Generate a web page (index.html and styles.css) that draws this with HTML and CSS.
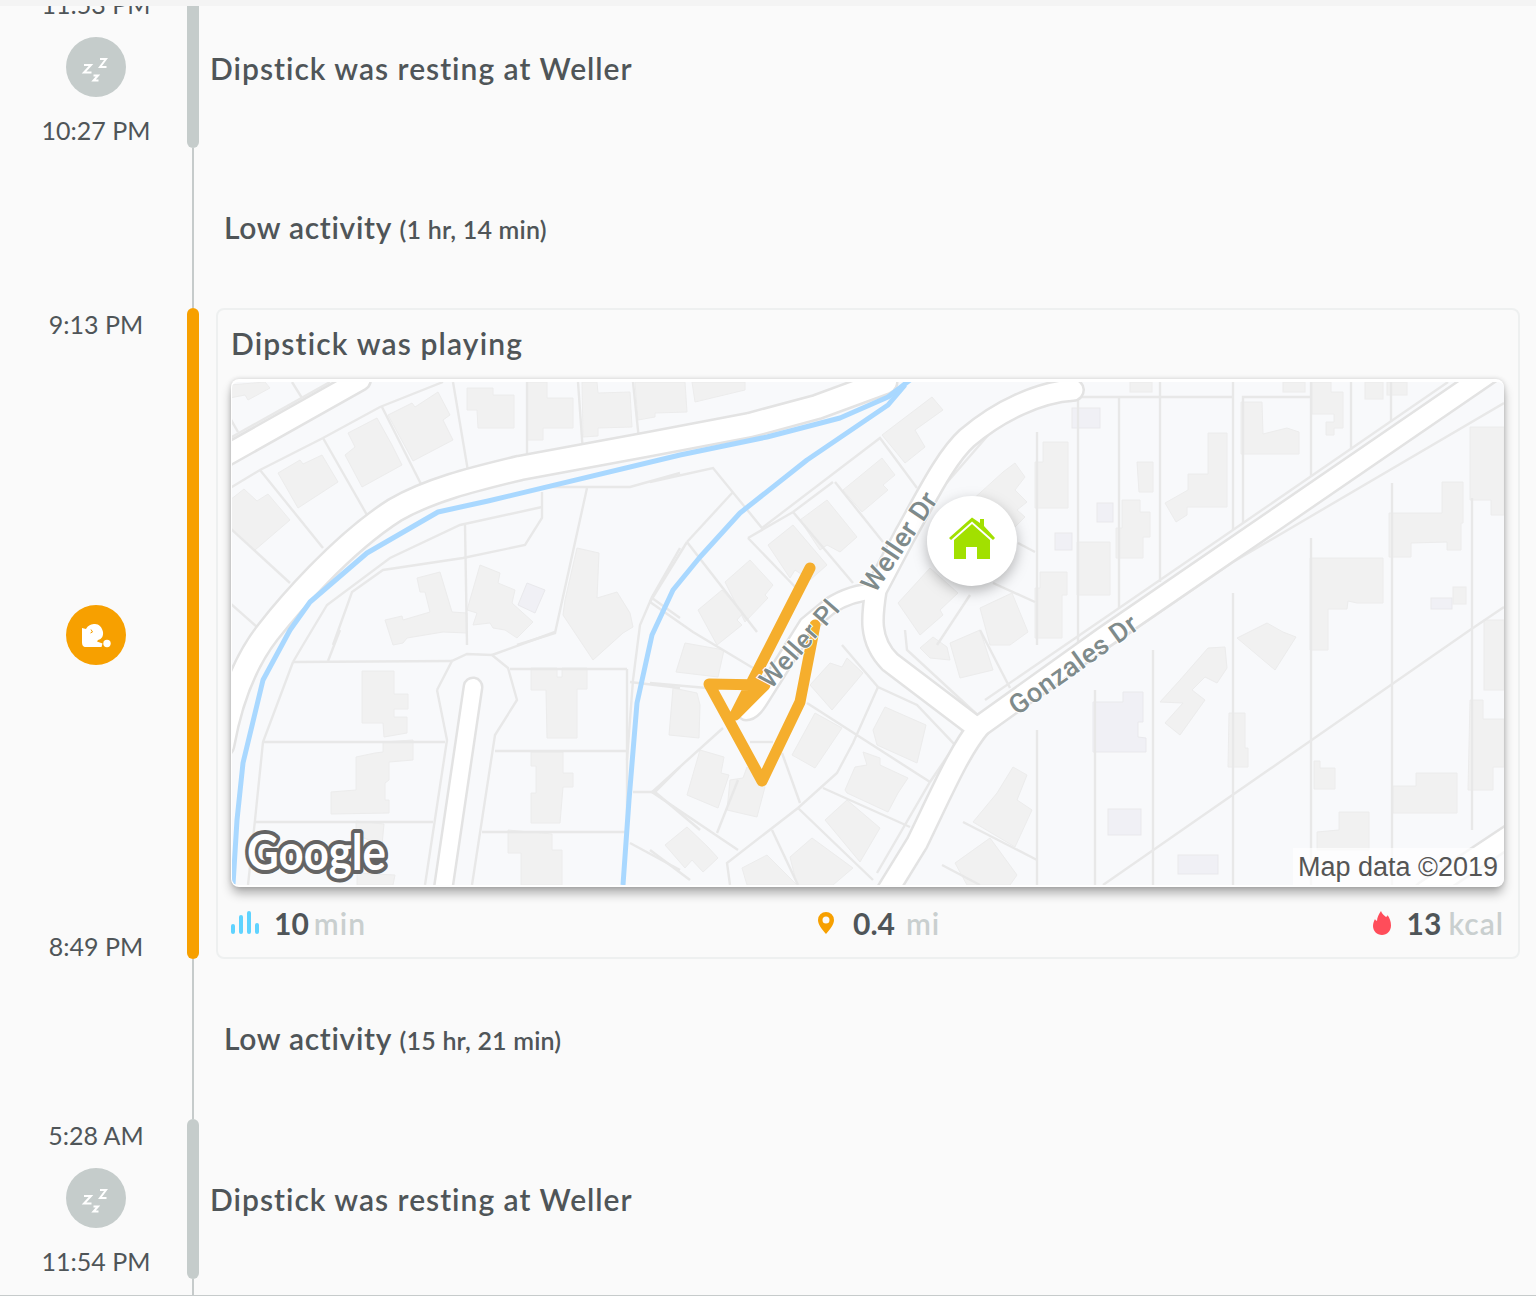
FILE: index.html
```html
<!DOCTYPE html>
<html lang="en">
<head>
<meta charset="utf-8">
<title>Dipstick timeline</title>
<link rel="stylesheet" href="styles.css">
</head>
<body>
<div class="page">
  <div class="topstrip"></div>
  <div class="timeline">

    <section class="row row-short">
      <div class="times">
        <div class="time">11:53 PM</div>
        <div class="badge badge-rest">
          <svg viewBox="0 0 60 60" class="badge-icon"><path class="zzz" d="M34 22h6l-6 8h6.500M18 28h7l-7 7.500h7.500M27.500 38.500h4.500l-4.500 5h5"/></svg>
        </div>
        <div class="time">10:27 PM</div>
      </div>
      <div class="bar bar-rest"></div>
      <h2 class="rest-title">Dipstick was resting at Weller</h2>
    </section>

    <section class="gap">
      <div class="line"></div>
      <p class="low">Low activity <span class="low-sub">(1 hr, 14 min)</span></p>
    </section>

    <section class="row">
      <div class="times times-play">
        <div class="time">9:13 PM</div>
        <div class="badge badge-play">
          <svg viewBox="0 0 60 60" class="badge-icon"><path class="dog" d="M16 23L20 24C22 20 26 19 29 19C33 19 36 22 37 27C37.500 31 36 34 32 35L31 36.500L36.500 38.500L35.500 42L20 42C17 42 16 40 16 37Z"/><path class="dog-ear" d="M25 24.500l1.500 2.500-2 1"/><circle class="dog" cx="41" cy="38.500" r="3.700"/></svg>
        </div>
        <div class="time">8:49 PM</div>
      </div>
      <div class="bar bar-play"></div>
      <article class="card">
        <h2 class="card-title">Dipstick was playing</h2>
        <div class="map">
          <svg class="map-svg" viewBox="232 382 1272 503">
            <rect class="land" x="232" y="382" width="1272" height="503"/>

            <g class="b">
              <polygon points="230,385 265,382 270,388 248,400 245,395 230,398"/>
              <polygon points="388,415 412,403 415,407 438,392 450,415 443,420 453,440 413,461"/>
              <polygon points="348,433 377,418 392,445 402,465 362,487 345,455 355,447"/>
              <polygon points="278,473 300,460 303,464 322,455 338,482 298,508"/>
              <polygon points="230,500 244,489 257,501 268,494 290,520 255,550 230,528"/>
              <polygon points="467,388 493,388 493,395 514,395 514,428 478,428 477,410 467,410"/>
              <polygon points="527,382 547,382 547,398 573,398 573,428 543,428 543,440 527,440"/>
              <polygon points="582,382 597,382 598,393 630,392 632,427 598,428 598,436 583,437"/>
              <polygon points="635,382 685,382 687,412 655,413 655,417 638,420"/>
              <polygon points="692,382 745,382 745,390 695,402"/>
              <polygon points="417,578 440,572 452,612 467,613 467,633 443,632 407,638 403,643 393,645 385,620 402,616 403,620 430,612 425,592 420,592"/>
              <polygon points="480,565 500,573 498,583 515,590 512,603 533,622 517,638 505,630 493,628 490,623 473,625 477,613 467,610"/>
              <polygon points="577,548 599,553 597,598 617,592 630,613 633,627 623,633 593,660 563,615 565,600"/>
              <polygon points="882,435 932,397 943,410 915,430 925,447 905,463"/>
              <polygon points="843,490 882,458 895,475 883,485 888,490 862,512"/>
              <polygon points="800,520 827,500 857,537 840,552 827,545 820,550"/>
              <polygon points="768,545 793,525 827,565 810,580 795,570 790,578"/>
              <polygon points="725,582 750,560 773,585 765,595 768,598 745,622"/>
              <polygon points="698,610 722,590 743,613 737,620 742,625 717,645"/>
              <polygon points="898,603 930,568 958,593 940,610 943,615 920,635"/>
              <polygon points="1003,472 1015,463 1025,477 1015,490 1027,502 1017,510 1025,517 1010,532 970,502"/>
              <polygon points="950,643 980,630 993,670 960,678"/>
              <polygon points="920,648 933,637 947,647 950,660 930,658"/>
              <polygon points="980,608 1012,593 1028,632 1010,645 990,645"/>
              <polygon points="1035,462 1043,462 1043,442 1068,442 1068,508 1035,508"/>
              <polygon points="1077,542 1110,542 1110,595 1077,595"/>
              <polygon points="1040,572 1067,572 1067,595 1062,595 1062,638 1035,638 1035,588 1040,588"/>
              <polygon points="1137,462 1153,462 1153,492 1139,492"/>
              <polygon points="1122,500 1140,500 1140,512 1150,512 1150,537 1143,537 1143,558 1116,558 1116,528 1122,528"/>
              <polygon points="1208,433 1227,433 1227,507 1187,507 1187,515 1176,522 1165,503 1188,490 1188,474 1208,474"/>
              <polygon points="1241,402 1262,402 1263,434 1287,428 1299,432 1299,454 1241,454"/>
              <polygon points="1312,382 1331,382 1331,392 1343,392 1343,428 1334,428 1334,435 1326,435 1326,422 1334,422 1334,414 1312,414"/>
              <rect x="1283" y="382" width="22" height="10"/>
              <rect x="1130" y="382" width="22" height="10"/>
              <rect x="1365" y="382" width="18" height="17"/>
              <rect x="1387" y="382" width="20" height="13"/>
              <polygon points="1470,427 1504,427 1504,515 1491,515 1491,500 1470,500"/>
              <polygon points="1442,482 1463,482 1463,523 1461,523 1461,550 1447,550 1447,542 1411,543 1411,557 1389,557 1389,513 1442,513"/>
              <polygon points="1310,558 1383,558 1383,603 1357,603 1348,601 1347,609 1328,609 1328,650 1310,650"/>
              <rect x="1453" y="587" width="13" height="17"/>
              <polygon points="1237,638 1267,623 1283,632 1296,637 1275,670"/>
              <polygon points="1208,648 1225,647 1227,668 1217,683 1205,677 1192,690 1205,700 1180,735 1165,723 1183,703 1160,702 1180,680"/>
              <polygon points="1229,713 1245,713 1245,748 1248,748 1248,767 1228,767"/>
              <polygon points="1314,761 1320,761 1320,768 1335,768 1335,789 1314,789"/>
              <polygon points="1393,786 1416,786 1416,773 1457,773 1457,813 1393,813"/>
              <polygon points="1339,812 1369,812 1369,850 1317,850 1317,832 1339,830"/>
              <rect x="1484" y="620" width="20" height="70"/>
              <polygon points="1470,700 1483,700 1483,719 1504,719 1504,767 1493,767 1493,790 1468,790"/>
              <polygon points="362,671 394,671 394,694 408,694 408,709 394,709 394,717 407,717 407,733 384,737 383,723 362,723"/>
              <polygon points="383,742 413,740 413,760 389,762 389,780 385,783 385,800 389,800 389,813 331,814 331,792 356,790 356,757 375,753 383,752"/>
              <polygon points="356,821 384,824 382,845 356,835"/>
              <polygon points="357,873 395,875 393,885 357,885"/>
              <polygon points="531,668 557,668 557,677 562,677 562,668 587,668 587,689 577,689 577,738 547,738 546,690 531,690"/>
              <polygon points="531,752 563,752 563,773 573,773 573,787 563,787 560,823 531,823 531,793 536,793 536,766 531,766"/>
              <polygon points="508,830 552,834 552,850 562,850 562,885 521,885 521,853 508,853"/>
              <polygon points="685,643 724,650 718,677 676,672"/>
              <polygon points="673,688 697,693 700,705 699,738 669,735"/>
              <polygon points="700,750 724,757 721,773 729,775 718,808 687,795"/>
              <polygon points="730,780 743,778 747,767 765,787 757,817 727,810"/>
              <polygon points="810,685 830,663 842,667 847,658 863,673 832,710"/>
              <polygon points="792,755 815,713 842,728 815,768"/>
              <polygon points="873,730 885,707 926,725 917,763 877,745"/>
              <polygon points="845,790 855,767 867,765 863,752 880,758 880,765 908,778 898,793 888,812 847,793"/>
              <polygon points="825,820 847,800 880,828 860,862"/>
              <polygon points="665,845 687,827 708,847 718,858 703,872 692,860 685,868"/>
              <polygon points="790,857 812,838 853,868 833,885 797,885"/>
              <polygon points="742,868 767,855 797,885 747,885"/>
              <polygon points="973,822 997,793 1013,767 1027,775 1017,800 1032,810 1015,847"/>
              <polygon points="955,863 990,838 1017,875 1010,885 967,885"/>
            </g>
            <g class="b-lilac">
              <rect x="1072" y="408" width="28" height="20"/>
              <rect x="1055" y="533" width="17" height="17"/>
              <rect x="1097" y="503" width="16" height="19"/>
              <rect x="1431" y="598" width="21" height="11"/>
              <polygon points="527,583 545,590 535,613 518,605"/>
              <polygon points="1093,702 1123,702 1123,692 1143,692 1143,722 1138,722 1138,737 1146,738 1146,752 1093,752"/>
              <rect x="1108" y="809" width="33" height="26"/>
              <rect x="1178" y="855" width="40" height="19"/>
            </g>

            <g class="lot">
              <polyline points="230,488 260,470 323,438 380,407 443,382"/>
              <polyline points="260,470 323,548"/>
              <polyline points="323,438 367,515"/>
              <polyline points="382,407 423,488"/>
              <polyline points="453,382 469,477"/>
              <polyline points="527,382 527,465"/>
              <polyline points="578,382 583,453"/>
              <polyline points="633,382 639,440"/>
              <polyline points="230,528 290,583"/>
              <polyline points="230,603 258,628"/>
              <polyline points="292,382 302,398"/>
              <polyline points="230,418 238,432"/>
              <polyline points="230,438 330,382"/>
              <polyline points="542,492 542,518 525,545 463,558 383,570 352,592 333,645"/>
              <polyline points="542,507 460,525 390,558 327,605 303,645 293,662"/>
              <polyline points="465,525 467,645"/>
              <polyline points="587,488 555,633 517,645"/>
              <polyline points="543,487 630,487 680,473"/>
              <polyline points="680,548 652,597 640,625 633,680 627,760"/>
              <polyline points="652,598 680,618"/>
              <polyline points="650,482 713,468 762,528 880,438 917,488"/>
              <polyline points="687,542 733,492"/>
              <polyline points="687,542 650,602"/>
              <polyline points="687,542 757,632"/>
              <polyline points="748,538 793,512 833,482"/>
              <polyline points="748,538 800,592"/>
              <polyline points="793,512 853,583"/>
              <polyline points="835,482 883,542"/>
              <polyline points="650,602 693,632 753,668"/>
              <polyline points="1037,432 1037,645"/>
              <polyline points="1078,382 1078,645"/>
              <polyline points="1119,398 1119,608"/>
              <polyline points="1160,382 1160,582"/>
              <polyline points="1233,382 1233,530"/>
              <polyline points="1243,523 1243,397 1310,397"/>
              <polyline points="1311,382 1311,477"/>
              <polyline points="1351,382 1351,450"/>
              <polyline points="1391,382 1391,422"/>
              <polyline points="1037,397 1233,397"/>
              <polyline points="1233,593 1233,885"/>
              <polyline points="1311,538 1311,885"/>
              <polyline points="1392,483 1392,885"/>
              <polyline points="1472,498 1472,830"/>
              <polyline points="1153,650 1153,885"/>
              <polyline points="1095,690 1095,885"/>
              <polyline points="1103,885 1470,630 1504,607"/>
              <polyline points="1000,722 1233,562 1504,403"/>
              <polyline points="985,700 1230,532 1448,382"/>
              <polyline points="650,683 707,688"/>
              <polyline points="807,703 930,782"/>
              <polyline points="842,645 878,687 917,705 955,745 930,782 877,873"/>
              <polyline points="878,687 853,743 837,773 798,808 727,863 730,885"/>
              <polyline points="723,728 652,792 738,850"/>
              <polyline points="782,753 800,803"/>
              <polyline points="750,742 773,742"/>
              <polyline points="823,788 910,827"/>
              <polyline points="798,808 873,880"/>
              <polyline points="772,830 798,885"/>
              <polyline points="738,780 717,833"/>
              <polyline points="650,850 690,880"/>
              <polyline points="963,822 1037,860"/>
              <polyline points="942,865 980,885"/>
              <polyline points="1037,730 1037,885"/>
              <polyline points="983,720 907,650 905,630"/>
              <polyline points="980,630 1010,688"/>
              <polyline points="1018,543 1035,552"/>
              <polyline points="993,583 1035,602"/>
              <polyline points="970,595 937,645"/>
              <polyline points="293,662 452,661"/>
              <polyline points="293,662 263,742 255,820 248,885"/>
              <polyline points="263,742 445,742"/>
              <polyline points="255,822 433,822"/>
              <polyline points="437,690 452,661 467,654 492,655 508,668 517,700 495,735 472,885"/>
              <polyline points="437,690 447,740 425,885"/>
              <polyline points="492,655 555,632"/>
              <polyline points="510,669 627,669"/>
              <polyline points="495,751 627,751"/>
              <polyline points="482,832 625,832"/>
              <polyline points="627,669 627,830"/>
              <polyline points="630,682 680,688"/>
              <polyline points="633,792 655,792 680,767"/>
              <polyline points="655,792 700,830"/>
              <polyline points="630,843 680,870"/>
              <polyline points="340,630 328,661"/>
              <polyline points="923,510 1017,402 1073,384"/>
            </g>

            <g class="casing">
              <polyline class="w17" points="225,456 360,380"/>
              <path class="w20" d="M222 745C232 690 250 655 268 632S340 545 395 510C430 490 470 480 520 468L650 444L750 425L817 407L885 382"/>
              <path class="w17" d="M1073 390C1040 392 1000 410 967 438C945 458 925 500 905 535L876 590C872 615 868 640 890 662L977 728"/>
              <path class="w12" d="M878 591C860 592 845 596 830 606L807 625L763 695C757 705 752 712 746 712"/>
              <polyline class="w17" points="1508,360 1103,638 980,726"/>
              <path class="w17" d="M980 726C960 750 945 785 917 843L888 890"/>
              <polyline class="w16" points="473,687 443,890"/>
              <polyline class="w17" points="1515,832 1425,892"/>
            </g>
            <g class="road">
              <polyline class="w17" points="225,456 360,380"/>
              <path class="w20" d="M222 745C232 690 250 655 268 632S340 545 395 510C430 490 470 480 520 468L650 444L750 425L817 407L885 382"/>
              <path class="w17" d="M1073 390C1040 392 1000 410 967 438C945 458 925 500 905 535L876 590C872 615 868 640 890 662L977 728"/>
              <path class="w12" d="M878 591C860 592 845 596 830 606L807 625L763 695C757 705 752 712 746 712"/>
              <polyline class="w17" points="1508,360 1103,638 980,726"/>
              <path class="w17" d="M980 726C960 750 945 785 917 843L888 890"/>
              <polyline class="w16" points="473,687 443,890"/>
              <polyline class="w17" points="1515,832 1425,892"/>
            </g>

            <polyline class="water" points="233,885 237,820 243,763 263,680 290,630 310,602 367,553 438,512 488,501 680,455 767,437 840,418 888,397 910,380"/>
            <polyline class="water" points="623,885 629,800 637,703 652,635 673,590 700,557 740,513 807,460 888,405 905,385"/>

            <polyline class="route" points="810,568 735,715 765,685 709,684 762,781 800,702 815,625"/>

            <g class="map-label">
              <text transform="translate(875 594) rotate(-56)">Weller Dr</text>
              <text class="label-small" transform="translate(771 690) rotate(-49)">Weller Pl</text>
              <text transform="translate(1017 716) rotate(-35.500)">Gonzales Dr</text>
            </g>

            <g class="home">
              <circle class="home-disc" cx="972" cy="541" r="45"/>
              <path class="home-body" d="M954 540L972 524L990 540V559H977V547H966V559H954Z"/>
              <path class="home-roof" d="M949 538L972 517.500L980 523V519H984V526L995 538L993 540L972 521.500L951 540Z"/>
            </g>

            <text class="google" x="247" y="870" textLength="139" lengthAdjust="spacingAndGlyphs">Google</text>
            <rect class="attr-bg" x="1293" y="848" width="211" height="37"/>
            <text class="attr" x="1298" y="876">Map data ©2019</text>
          </svg>
        </div>
        <div class="stats">
          <div class="stat">
            <svg class="stat-icon" viewBox="0 0 30 24" width="30" height="24"><g class="bars"><rect x="0" y="13" width="4" height="10" rx="2"/><rect x="8" y="4" width="4" height="19" rx="2"/><rect x="16" y="0" width="4" height="23" rx="2"/><rect x="24" y="12" width="4" height="11" rx="2"/></g></svg>
            <span class="num n-bars">10</span> <span class="unit">min</span>
          </div>
          <div class="stat">
            <svg class="stat-icon" viewBox="0 0 16 22" width="16" height="22"><path class="pin" fill-rule="evenodd" d="M8 0a8 8 0 0 1 8 8c0 4.500-4 9.500-8 14C4 17.500 0 12.500 0 8a8 8 0 0 1 8-8zm0 4.500a3.500 3.500 0 1 0 0 7 3.500 3.500 0 0 0 0-7z"/></svg>
            <span class="num n-pin">0.4</span> <span class="unit">mi</span>
          </div>
          <div class="stat">
            <svg class="stat-icon" viewBox="0 0 18 24" width="18" height="24"><path class="flame" d="M8 0c1 3 3 4 5 6 1-.500 1.500-1 1.500-2C16.500 7 18 10 18 14.500 18 20 14 24 9 24S0 20 0 15c0-3 1-5 2-7 .500 1 1 1.500 2 2C4 6 6 3 8 0z"/></svg>
            <span class="num n-flame">13</span> <span class="unit">kcal</span>
          </div>
        </div>
      </article>
    </section>

    <section class="gap">
      <div class="line"></div>
      <p class="low">Low activity <span class="low-sub">(15 hr, 21 min)</span></p>
    </section>

    <section class="row row-short">
      <div class="times">
        <div class="time">5:28 AM</div>
        <div class="badge badge-rest">
          <svg viewBox="0 0 60 60" class="badge-icon"><path class="zzz" d="M34 22h6l-6 8h6.500M18 28h7l-7 7.500h7.500M27.500 38.500h4.500l-4.500 5h5"/></svg>
        </div>
        <div class="time">11:54 PM</div>
      </div>
      <div class="bar bar-rest"></div>
      <h2 class="rest-title">Dipstick was resting at Weller</h2>
    </section>

    <section class="gap gap-tail">
      <div class="line"></div>
    </section>
  </div>
</div>
</body>
</html>
```
FILE: styles.css
```css
* { box-sizing: border-box; }
html, body { margin: 0; padding: 0; }
body {
  background: #fafafa;
  color: #4f5558;
  font-family: Lato, "Open Sans", sans-serif;
}
.page {
  position: relative;
  height: 1296px;
  overflow: hidden;
  border-bottom: 1px solid #c6cbcb;
}
.topstrip {
  position: absolute;
  top: 0; left: 0; right: 0;
  height: 6px;
  background: #f4f4f4;
  z-index: 2;
}
.timeline { margin-top: -12px; }

.row { display: flex; align-items: stretch; }
.row-short { height: 160px; }
.times {
  width: 192px;
  flex: none;
  padding: 4px 0 6px;
  display: flex;
  flex-direction: column;
  align-items: center;
  justify-content: space-between;
}
.times-play { padding-bottom: 1px; }
.time { font-size: 25px; line-height: 24px; white-space: nowrap; }
.badge { width: 60px; height: 60px; border-radius: 50%; }
.badge-icon { display: block; width: 60px; height: 60px; }
.badge-rest { background: #c5cccb; }
.badge-play { background: #f7a000; }
.zzz { fill: none; stroke: #fff; stroke-width: 2; }
.dog { fill: #fff; }
.dog-ear { fill: none; stroke: #f7a000; stroke-width: 1; }

.bar { width: 12px; flex: none; margin-left: -5px; border-radius: 6px; }
.bar-rest { background: #c5cccb; }
.bar-play { background: #f7a000; }

.rest-title {
  margin: 0 0 0 11px;
  align-self: center;
  font-size: 30px;
  line-height: 34px;
  font-weight: 600;
  letter-spacing: 1px;
  white-space: nowrap;
}

.gap { height: 160px; display: flex; align-items: center; }
.gap-tail { height: 40px; }
.line { width: 2px; height: 100%; margin-left: 192px; background: #c6cbcb; flex: none; }
.low {
  margin: 0 0 0 30px;
  font-size: 30px;
  line-height: 34px;
  font-weight: 600;
  letter-spacing: .7px;
  white-space: nowrap;
}
.low-sub { font-size: 25px; letter-spacing: .2px; }

.card {
  flex: 1;
  min-width: 0;
  margin: 0 16px 0 17px;
  padding: 0 14px 0 13px;
  background: #fafafa;
  border: 2px solid #eef0f0;
  border-radius: 8px;
}
.card-title {
  margin: 0 0 19px;
  padding-top: 16px;
  font-size: 30px;
  line-height: 34px;
  font-weight: 600;
  letter-spacing: 1.150px;
}
.map {
  height: 508px;
  padding: 3px 0 2px 1px;
  background: #fff;
  border-radius: 8px;
  overflow: hidden;
  box-shadow: 0 7px 11px -1px rgba(0,0,0,.32), 0 0 5px rgba(0,0,0,.16);
}
.map-svg { display: block; width: 1272px; height: 503px; border-radius: 6px; }
.land { fill: #f8f9fb; }
.b polygon, .b rect { fill: #f1f1f1; stroke: #ececec; stroke-width: 1; }
.b-lilac polygon, .b-lilac rect { fill: #f0f0f5; stroke: #e9e9ec; stroke-width: 1; }
.lot polyline { fill: none; stroke: #e8e8e8; stroke-width: 2.400; }
.casing polyline, .casing path { fill: none; stroke: #e3e3e3; stroke-linecap: round; stroke-linejoin: round; }
.road polyline, .road path { fill: none; stroke: #fff; stroke-linecap: round; stroke-linejoin: round; }
.casing .w20 { stroke-width: 27; }
.casing .w17 { stroke-width: 24; }
.casing .w16 { stroke-width: 21; }
.casing .w12 { stroke-width: 19; }
.road .w20 { stroke-width: 22; }
.road .w17 { stroke-width: 19; }
.road .w16 { stroke-width: 16; }
.road .w12 { stroke-width: 14; }
.water { fill: none; stroke: #a9d8ff; stroke-width: 5; stroke-linejoin: round; }
.route { fill: none; stroke: #f5ae2d; stroke-width: 11; stroke-linecap: round; stroke-linejoin: round; }
.map-label text {
  font-family: Roboto, sans-serif;
  font-size: 27px;
  font-weight: 500;
  letter-spacing: .5px;
  fill: #7f8b8b;
  stroke: #fff;
  stroke-width: 2px;
  paint-order: stroke;
}
.map-label .label-small { font-size: 26px; }
.home-disc { fill: #fff; filter: drop-shadow(0 5px 7px rgba(0,0,0,.28)); }
.home-body, .home-roof { fill: #a2e000; }
.google {
  font-family: Lato, sans-serif;
  font-size: 50px;
  font-weight: 700;
  fill: #fff;
  stroke: #646464;
  stroke-width: 8px;
  stroke-linejoin: round;
  paint-order: stroke;
}
.attr-bg { fill: rgba(255,255,255,.7); }
.attr { font-family: "Liberation Sans", Arial, sans-serif; font-size: 27px; fill: #555; }

.stats {
  margin-top: 19px;
  padding-bottom: 17px;
  display: grid;
  grid-template-columns: 587px 1fr auto;
}
.stat { display: flex; align-items: center; height: 34px; white-space: nowrap; font-size: 30px; font-weight: 600; }
.stat-icon { flex: none; display: block; }
.bars rect { fill: #5fd3ff; }
.pin { fill: #f7a000; }
.flame { fill: #ff4d5a; }
.num { font-weight: 700; }
.n-bars { margin-left: 13px; }
.n-pin { margin-left: 19px; }
.n-flame { margin-left: 16px; }
.unit { margin-left: 7px; color: #c9cfcf; letter-spacing: 1px; }
.n-bars + .unit { margin-left: 5px; }
.n-pin + .unit { margin-left: 11px; }
```
